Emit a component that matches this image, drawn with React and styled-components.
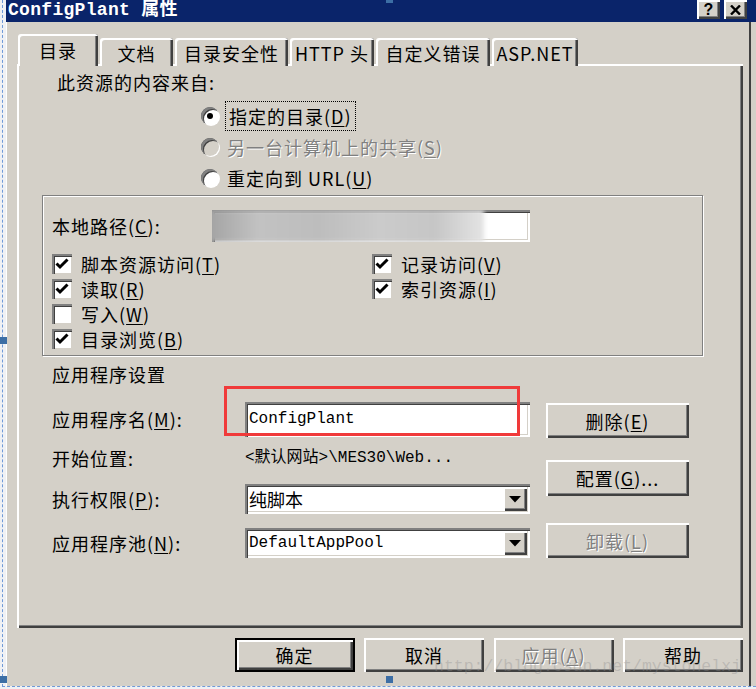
import React from 'react';
import styled, { createGlobalStyle, css } from 'styled-components';

const FACE = '#d4d0c8';

const GlobalStyle = createGlobalStyle`
  html, body { margin: 0; padding: 0; background: #f0f1f4; }
  body {
    font-family: "Noto Sans CJK SC", "Liberation Sans", sans-serif;
    font-size: 18px;
    color: #000;
  }
  * { box-sizing: border-box; }
`;

const raised = css`
  box-shadow: inset 2px 2px 0 #fff, inset -2px -2px 0 #404040, inset -3px -3px 0 #808080;
`;

const sunken = css`
  box-shadow: inset 2px 2px 0 #808080, inset 3px 3px 0 #404040, inset -2px -2px 0 #fff,
    inset -3px -3px 0 ${FACE};
`;

const Page = styled.div`
  position: relative;
  width: 756px;
  height: 689px;
  overflow: hidden;
  padding-left: 2px;
  background: #f0f1f4;
`;

const Selection = styled.div`
  height: 687px;
  border-left: 1px dashed #6f9ad8;
  border-bottom: 1px dashed #6f9ad8;
  padding-left: 3px;
`;

const Window = styled.div`
  width: 750px;
  height: 686px;
  display: flex;
  flex-direction: column;
  background: ${FACE};
`;

const TitleBar = styled.div`
  height: 22px;
  flex: none;
  display: flex;
  align-items: flex-start;
  padding-left: 2px;
  background: #0a246a;
`;

const Title = styled.div`
  font-family: "Liberation Mono", "Noto Sans CJK SC", monospace;
  font-weight: bold;
  font-size: 18px;
  line-height: 20px;
  letter-spacing: 0.3px;
  color: #fff;
  white-space: pre;
`;

const CaptionButtons = styled.div`
  margin-left: auto;
  margin-right: 9px;
  display: flex;
  gap: 4px;
`;

const CaptionButton = styled.div`
  width: 23px;
  height: 19px;
  display: flex;
  align-items: center;
  justify-content: center;
  background: ${FACE};
  font-family: "Liberation Sans", sans-serif;
  font-weight: bold;
  font-size: 16px;
  ${raised};
`;

const Body = styled.div`
  flex: 1;
  display: flex;
  flex-direction: column;
  padding: 12px 13px 0 11px;
  box-shadow: inset 1px 0 0 #fff, inset -5px 0 0 ${FACE}, inset -7px 0 0 #404040;
`;

const TabRow = styled.div`
  height: 32px;
  display: flex;
  align-items: flex-end;
  gap: 2px;
  padding-left: 1px;
  margin-bottom: -2px;
`;

const Tab = styled.div`
  position: relative;
  z-index: ${(p) => (p.$active ? 1 : 0)};
  width: ${(p) => p.$w}px;
  height: ${(p) => (p.$active ? 32 : 28)}px;
  display: flex;
  align-items: center;
  justify-content: center;
  padding-top: ${(p) => (p.$active ? 0 : 2)}px;
  line-height: 22px;
  letter-spacing: 1px;
  background: ${FACE};
  border-radius: 3px 3px 0 0;
  box-shadow: inset 2px 2px 0 #fff, inset -2px 0 0 #404040, inset -3px 0 0 #808080;
`;

const Panel = styled.div`
  width: 726px;
  height: 564px;
  padding: 7px 0 0 25px;
  background: ${FACE};
  box-shadow: inset 2px 2px 0 #fff, inset -2px -2px 0 #404040, inset -3px -3px 0 #808080;
`;

const Text = styled.div`
  line-height: 22px;
  letter-spacing: 1px;
  white-space: nowrap;
  margin: ${(p) => p.$m || '0'};
  color: ${(p) => (p.$disabled ? '#808080' : '#000')};
  text-shadow: ${(p) => (p.$disabled ? '1px 1px 0 #fff' : 'none')};
`;

const RadioList = styled.div`
  margin: 7px 0 0 159px;
  display: flex;
  flex-direction: column;
`;

const RadioRow = styled.div`
  height: 31px;
  display: flex;
  align-items: center;
  gap: 8px;
`;

const RadioDot = styled.span`
  position: relative;
  width: 18px;
  height: 18px;
  border-radius: 50%;
  background: ${(p) => (p.$disabled ? FACE : '#fff')};
  box-shadow: inset 2px 2px 0 #808080, inset 3px 3px 0 #404040, 1px 1px 0 #fff;

  &::after {
    content: '';
    display: ${(p) => (p.$checked ? 'block' : 'none')};
    position: absolute;
    left: 6px;
    top: 6px;
    width: 6px;
    height: 6px;
    border-radius: 50%;
    background: #000;
  }
`;

const Focus = styled.span`
  outline: 1px dotted #000;
  outline-offset: 1px;
  padding: 0 2px;
`;

const GroupBox = styled.div`
  width: 661px;
  height: 161px;
  margin-top: 2px;
  padding: 14px 0 0 9px;
  border: 1px solid #808080;
  box-shadow: inset 1px 1px 0 #fff, 1px 1px 0 #fff;
`;

const PathRow = styled.div`
  height: 32px;
  display: flex;
  align-items: center;
`;

const LabelCell = styled(Text)`
  width: ${(p) => p.$w}px;
  flex: none;
`;

const PathField = styled.div`
  width: 318px;
  height: 32px;
  display: flex;
  overflow: hidden;
  background: #fff;
  ${sunken};
`;

const Smudge = styled.div`
  width: 275px;
  height: 100%;
  margin-left: -3px;
  background: linear-gradient(90deg, #a3a3a3 0%, #c2c2c2 18%, #bdbdbd 40%, #cbcbcb 62%, #c6c6c6 82%, #e4e4e4 100%);
  filter: blur(2px);
`;

const CheckGrid = styled.div`
  margin-top: 9px;
  display: grid;
  grid-template-columns: 320px 1fr;
  grid-auto-rows: 25px;
`;

const CheckRow = styled.div`
  display: flex;
  align-items: center;
  gap: 9px;
`;

const CheckBox = styled.span`
  width: 20px;
  height: 20px;
  display: flex;
  align-items: center;
  justify-content: center;
  background: #fff;
  box-shadow: inset 2px 2px 0 #808080, inset 3px 3px 0 #404040, inset -1px -1px 0 ${FACE};
`;

const FormArea = styled.div`
  margin: 15px 0 0 10px;
  display: flex;
  gap: 16px;
`;

const FieldGrid = styled.div`
  display: grid;
  grid-template-columns: 193px 285px;
  grid-template-rows: 38px 40px 42px 46px;
  align-items: center;
`;

const TextField = styled.div`
  height: ${(p) => p.$h}px;
  display: flex;
  align-items: center;
  padding-left: 4px;
  background: #fff;
  font-family: "Liberation Mono", "Noto Sans CJK SC", monospace;
  font-size: 16px;
  ${sunken};
`;

const PlainValue = styled.div`
  font-family: "Liberation Mono", "Noto Sans CJK SC", monospace;
  font-size: 16px;
  line-height: 22px;
  white-space: nowrap;
`;

const SelectBox = styled(TextField)`
  padding-right: 3px;
`;

const SelectValue = styled.span`
  flex: 1;
  white-space: nowrap;
`;

const DropButton = styled.span`
  width: 24px;
  height: calc(100% - 6px);
  display: flex;
  align-items: center;
  justify-content: center;
  background: ${FACE};
  ${raised};
`;

const ButtonCol = styled.div`
  width: 143px;
  padding-top: 3px;
  display: flex;
  flex-direction: column;
`;

const PushButton = styled.div`
  width: ${(p) => p.$w}px;
  height: ${(p) => p.$h}px;
  margin-top: ${(p) => p.$mt || 0}px;
  display: flex;
  align-items: center;
  justify-content: center;
  letter-spacing: 1px;
  white-space: nowrap;
  background: ${FACE};
  color: ${(p) => (p.$disabled ? '#808080' : '#000')};
  text-shadow: ${(p) => (p.$disabled ? '1px 1px 0 #fff' : 'none')};
  ${raised};
  ${(p) =>
    p.$default &&
    css`
      outline: 2px solid #000;
      outline-offset: -2px;
      box-shadow: inset 4px 4px 0 #fff, inset -4px -4px 0 #404040, inset -5px -5px 0 #808080;
    `}
`;

const Footer = styled.div`
  margin-top: 10px;
  display: flex;
  justify-content: flex-end;
  gap: 9.5px;
`;

const RedMark = styled.div`
  position: absolute;
  left: 224px;
  top: 386px;
  width: 296px;
  height: 50px;
  border: 3px solid #f03a3a;
`;

const Watermark = styled.div`
  position: absolute;
  left: 434px;
  top: 657px;
  font-family: "Liberation Mono", monospace;
  font-size: 16.5px;
  color: rgba(140, 140, 140, 0.35);
  white-space: nowrap;
`;

const Handle = styled.div`
  position: absolute;
  left: ${(p) => p.$x}px;
  top: ${(p) => p.$y}px;
  width: 7px;
  height: 7px;
  background: #3c6ea5;
`;

const Key = styled.u`
  text-underline-offset: 2px;
`;

const Mn = ({ k }) => (
  <>
    (<Key>{k}</Key>)
  </>
);

const Check = () => (
  <svg width="14" height="14" viewBox="0 0 14 14">
    <polyline points="1.5,6.5 5,10 12.5,2.5" fill="none" stroke="#000" strokeWidth="3" />
  </svg>
);

const Arrow = () => (
  <svg width="12" height="7" viewBox="0 0 12 7">
    <polygon points="0,0 12,0 6,6.5" fill="#000" />
  </svg>
);

const tabs = [
  { label: '目录', w: 80, active: true },
  { label: '文档', w: 73 },
  { label: '目录安全性', w: 113 },
  { label: 'HTTP 头', w: 84 },
  { label: '自定义错误', w: 114 },
  { label: 'ASP.NET', w: 86 },
];

const checks = [
  { label: '脚本资源访问', k: 'T', on: true },
  { label: '记录访问', k: 'V', on: true },
  { label: '读取', k: 'R', on: true },
  { label: '索引资源', k: 'I', on: true },
  { label: '写入', k: 'W', on: false },
  null,
  { label: '目录浏览', k: 'B', on: true },
];

export default function App() {
  return (
    <Page>
      <GlobalStyle />
      <Selection>
        <Window>
          <TitleBar>
            <Title>ConfigPlant 属性</Title>
            <CaptionButtons>
              <CaptionButton>?</CaptionButton>
              <CaptionButton>
                <svg width="11" height="10" viewBox="0 0 11 10">
                  <path d="M1 0.5 L10 9.5 M10 0.5 L1 9.5" stroke="#000" strokeWidth="2.4" />
                </svg>
              </CaptionButton>
            </CaptionButtons>
          </TitleBar>

          <Body>
            <TabRow>
              {tabs.map((t) => (
                <Tab key={t.label} $w={t.w} $active={t.active}>
                  {t.label}
                </Tab>
              ))}
            </TabRow>

            <Panel>
              <Text $m="0 0 0 15px">此资源的内容来自:</Text>

              <RadioList>
                <RadioRow>
                  <RadioDot $checked />
                  <Text>
                    <Focus>
                      指定的目录<Mn k="D" />
                    </Focus>
                  </Text>
                </RadioRow>
                <RadioRow>
                  <RadioDot $disabled />
                  <Text $disabled>
                    另一台计算机上的共享<Mn k="S" />
                  </Text>
                </RadioRow>
                <RadioRow>
                  <RadioDot />
                  <Text>
                    重定向到 URL<Mn k="U" />
                  </Text>
                </RadioRow>
              </RadioList>

              <GroupBox>
                <PathRow>
                  <LabelCell $w={160}>
                    本地路径<Mn k="C" />:
                  </LabelCell>
                  <PathField>
                    <Smudge />
                  </PathField>
                </PathRow>
                <CheckGrid>
                  {checks.map((c, i) =>
                    c ? (
                      <CheckRow key={c.label}>
                        <CheckBox>{c.on && <Check />}</CheckBox>
                        <Text>
                          {c.label}
                          <Mn k={c.k} />
                        </Text>
                      </CheckRow>
                    ) : (
                      <span key={i} />
                    )
                  )}
                </CheckGrid>
              </GroupBox>

              <Text $m="7px 0 0 10px">应用程序设置</Text>

              <FormArea>
                <FieldGrid>
                  <Text>
                    应用程序名<Mn k="M" />:
                  </Text>
                  <TextField $h={35}>ConfigPlant</TextField>

                  <Text>开始位置:</Text>
                  <PlainValue>&lt;默认网站&gt;\MES30\Web...</PlainValue>

                  <Text>
                    执行权限<Mn k="P" />:
                  </Text>
                  <SelectBox $h={30}>
                    <SelectValue style={{ fontFamily: '"Noto Sans CJK SC", sans-serif', fontSize: 18 }}>纯脚本</SelectValue>
                    <DropButton>
                      <Arrow />
                    </DropButton>
                  </SelectBox>

                  <Text>
                    应用程序池<Mn k="N" />:
                  </Text>
                  <SelectBox $h={30}>
                    <SelectValue>DefaultAppPool</SelectValue>
                    <DropButton>
                      <Arrow />
                    </DropButton>
                  </SelectBox>
                </FieldGrid>

                <ButtonCol>
                  <PushButton $w={143} $h={35}>
                    删除<Mn k="E" />
                  </PushButton>
                  <PushButton $w={143} $h={36} $mt={22}>
                    配置<Mn k="G" />...
                  </PushButton>
                  <PushButton $w={143} $h={35} $mt={27} $disabled>
                    卸载<Mn k="L" />
                  </PushButton>
                </ButtonCol>
              </FormArea>
            </Panel>

            <Footer>
              <PushButton $w={120} $h={34} $default>
                确定
              </PushButton>
              <PushButton $w={120} $h={34}>
                取消
              </PushButton>
              <PushButton $w={120} $h={34} $disabled>
                应用<Mn k="A" />
              </PushButton>
              <PushButton $w={120} $h={34}>
                帮助
              </PushButton>
            </Footer>
          </Body>
        </Window>
      </Selection>

      <RedMark />
      <Watermark>http://blog.csdn.net/mystonelxj</Watermark>
      <Handle $x={0} $y={337} />
      <Handle $x={0} $y={676} />
      <Handle $x={386} $y={676} />
      <Handle $x={386} $y={-4} />
    </Page>
  );
}
